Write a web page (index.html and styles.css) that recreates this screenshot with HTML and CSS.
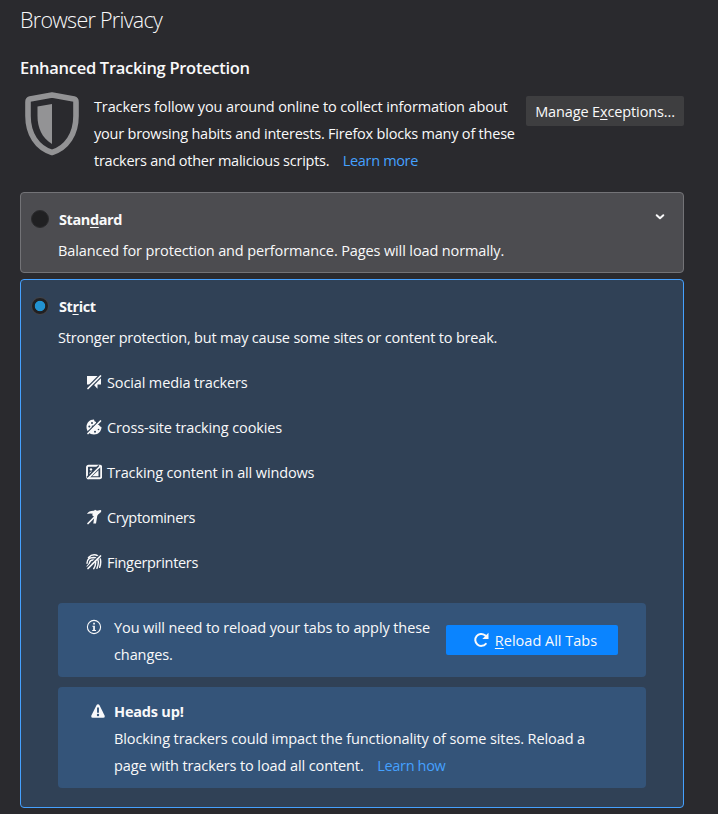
FILE: index.html
```html
<!DOCTYPE html>
<html lang="en">
<head>
<meta charset="utf-8">
<title>Browser Privacy</title>
<link rel="stylesheet" href="styles.css">
</head>
<body>
<main class="pane">
  <h1>Browser Privacy</h1>
  <h2>Enhanced Tracking Protection</h2>
  <section class="intro">
    <svg class="shield" viewBox="0 0 54 64"><path d="M27 3 49 7Q51 7.500 51 10V24C51 42 42 56 27 60.500 12 56 3 42 3 24V10Q3 7.500 5 7Z" fill="none" stroke="#939395" stroke-width="5.600" stroke-linejoin="round"/><path d="M12.500 14.500 27 12V52C17 46 12.500 36 12.500 24Z" fill="#939395"/></svg>
    <p class="intro-text"><span class="i1">Trackers follow you around online to collect information about</span><br><span class="i2">your browsing habits and interests. Firefox blocks many of these</span><br>trackers and other malicious scripts. <a class="link">Learn more</a></p>
    <button class="button manage">Manage E<u>x</u>ceptions...</button>
  </section>

  <section class="card standard">
    <div class="card-head"><span class="radio"></span><h3>Stan<u>d</u>ard</h3>
      <svg class="chevron" viewBox="0 0 10 8"><path d="M1.700 2.200 5 5.200 8.300 2.200" fill="none" stroke="#f9f9fa" stroke-width="2" stroke-linecap="round" stroke-linejoin="round"/></svg>
    </div>
    <p class="summary std-summary">Balanced for protection and performance. Pages will load normally.</p>
  </section>

  <section class="card strict">
    <div class="card-head"><span class="radio checked"></span><h3>St<u>r</u>ict</h3></div>
    <p class="summary strict-summary">Stronger protection, but may cause some sites or content to break.</p>
    <ul class="features">
      <li><svg viewBox="0 0 16 16"><path d="M1 2H14.500L15 3V10.500H11.500V14.800L8 11 7 10.500H1Z" fill="currentColor"/><path class="gap wide" d="M0 16.500 15 1.500"/><path class="slash" d="M2 14.500 14.500 2"/></svg><span class="f1">Social media trackers</span></li>
      <li><svg viewBox="0 0 16 16"><path d="M8 .5C3.500.5.5 4 .5 8s3 7.500 7.500 7.500S15.500 12 15.500 8Q14 8 13 6 10 6 10 3 8 2.500 8 .5Z" fill="currentColor"/><g class="holes"><circle cx="6" cy="4" r="1"/><circle cx="3.300" cy="7.500" r="1"/><circle cx="6.500" cy="7.200" r=".8"/><circle cx="9" cy="12.700" r="1"/><circle cx="12.500" cy="10.500" r=".8"/></g><path class="gap" d="M0 15 13.500 1.500"/><path class="slash" d="M2 14.500 14.500 2"/></svg><span class="f2">Cross-site tracking cookies</span></li>
      <li><svg viewBox="0 0 16 16"><rect x="1" y="1.800" width="14.200" height="12.400" rx="1.500" fill="none" stroke="currentColor" stroke-width="1.900"/><path d="M3.500 10.500V8.800L5 7.500l1.500.3ZM6 12.200l6.500-6V12.200Z" fill="currentColor"/><circle cx="5" cy="5.400" r="1.200" fill="currentColor"/><path class="gap" d="M1 13.500 13 1.500"/><path class="slash" d="M2 14.500 14.500 2"/></svg><span class="f3">Tracking content in all windows</span></li>
      <li><svg viewBox="0 0 16 16"><path d="M1 5Q3 1.500 8 1.800L9 .8 11 1.800 14.500 1V3.500L11.500 5.500 10 14.500H7.300L8.300 8 6 6 7 4.800Q3.500 4 1 5Z" fill="currentColor"/><path class="slash" d="M2 14.500 14.500 2"/></svg><span class="f4">Cryptominers</span></li>
      <li><svg viewBox="0 0 16 16"><g fill="none" stroke="currentColor" stroke-width="1.500" stroke-linecap="round"><path d="M2.500 3.500Q7-1 12 2M1 9.200Q1 3.500 7.500 3.400 12 3.500 12.300 7.500 12.500 11 11 14.300M1.300 12.200Q3.300 10.500 3.700 8.300 4.300 6 7 6 9.500 6 9.700 8.500 9.500 12 7.800 14.700M6 9.500 7 8.500M14.300 5q1 4-.6 8.300"/></g><path class="gap thin" d="M0 14.500 13 1.500"/><path class="slash" d="M2 14.500 14.500 2"/></svg><span class="f5">Fingerprinters</span></li>
    </ul>
    <div class="notice reload">
      <svg class="info" viewBox="0 0 16 16"><circle cx="8" cy="8" r="6.600" fill="none" stroke="currentColor" stroke-width="1.100"/><path d="M7.200 3.700h1.700v1.700H7.200ZM6.400 6.800h2.500V11H10v1H6.200v-1h1V7.800h-.8Z" fill="currentColor"/></svg>
      <p class="reload-text">You will need to reload your tabs to apply these<br>changes.</p>
      <button class="button primary"><svg viewBox="0 0 16 16"><path d="M12.800 11.800A6 6 0 1 1 12 3.200L14 5.200" fill="none" stroke="currentColor" stroke-width="2" stroke-linecap="round"/><path d="M15.500.8V7H9.300Z" fill="currentColor"/></svg><span><u>R</u>eload All Tabs</span></button>
    </div>
    <div class="notice warning">
      <svg class="warn" viewBox="0 0 16 16"><path d="M8 1.200Q8.900 1.200 9.400 2.100L14.700 12.700Q15.300 14.800 13.400 14.800H2.600Q.7 14.800 1.300 12.700L6.600 2.100Q7.100 1.200 8 1.200Z" fill="currentColor"/><path d="M8 5.300V9" stroke="#345479" stroke-width="1.900" stroke-linecap="round"/><circle cx="8" cy="12" r="1.200" fill="#345479"/></svg>
      <div><h3>Heads up!</h3>
      <p class="warn-text">Blocking trackers could impact the functionality of some sites. Reload a<br>page with trackers to load all content. <a class="link">Learn how</a></p></div>
    </div>
  </section>
</main>
</body>
</html>
```
FILE: styles.css
```css
* { box-sizing: border-box; }
body { margin: 0; background: #2a2a2e; color: #f9f9fa; font: 14.500px/27px "Open Sans", "Noto Sans", sans-serif; letter-spacing: -0.250px; }
h1, h2, h3, p, ul { margin: 0; padding: 0; }
p, h1, h2, h3, span { white-space: nowrap; }
u { text-decoration: underline; text-underline-offset: 2px; text-decoration-thickness: 1px; text-decoration-skip-ink: none; }
svg { display: block; flex: none; }
.pane { width: 664px; margin-left: 20px; }
h1 { font-size: 21.500px; font-weight: 300; line-height: 30px; padding-top: 5px; letter-spacing: -0.720px; }
h2 { font-size: 16.500px; font-weight: 600; line-height: 24px; margin-top: 21px; letter-spacing: -0.290px; }
h3 { font-size: 14.500px; font-weight: 700; line-height: 27px; letter-spacing: -0.400px; }
.intro { display: flex; height: 99px; margin-top: 13px; align-items: flex-start; }
.shield { width: 54px; height: 64px; margin: -1px 15px 0 5px; }
.intro-text { width: 432px; }
.i1 { letter-spacing: -0.130px; }
.i2 { letter-spacing: -0.215px; }
.link { color: #45a1ff; margin-left: 10px; letter-spacing: -0.340px; }
.button { border: 0; border-radius: 2px; height: 30px; padding: 0; font: inherit; letter-spacing: inherit; color: #f9f9fa; line-height: 30px; }
.manage { width: 158px; margin-top: 3px; padding-top: 1px; background: #3e3e40; white-space: nowrap; letter-spacing: -0.130px; }
.card { border: 1px solid #737377; border-radius: 4px; }
.standard { height: 81px; background: #4c4c50; }
.strict { height: 529px; margin-top: 6px; background: #304156; border-color: #45a1ff; }
.card-head { display: flex; align-items: center; height: 27px; margin-top: 13px; padding: 0 18px 0 10px; }
.radio { width: 18px; height: 18px; margin: -2px 10px 0 0; border-radius: 50%; background: #202022; border: 1px solid #2b2b2d; }
.checked { border: 1px solid #434348; background: radial-gradient(circle, #2292d0 0 4.800px, #202022 5.600px); }
.chevron { width: 10px; height: 8px; margin: -5px 0 0 auto; }
.summary { margin: 4px 0 0 37px; }
.std-summary { letter-spacing: -0.120px; }
.strict-summary { letter-spacing: -0.190px; }
.features { list-style: none; margin: 18px 0 0 65px; }
.features li { height: 27px; margin-bottom: 18px; display: flex; align-items: center; gap: 5px; }
.features svg { width: 16px; height: 16px; margin-top: -2px; }
.f1, .f2, .f3 { letter-spacing: -0.130px; }
.f4, .f5 { letter-spacing: -0.320px; }
.holes { fill: #304156; }
.gap { stroke: #304156; stroke-width: 1.700; }
.wide { stroke-width: 4; }
.thin { stroke-width: 1.200; }
.slash { stroke: currentColor; stroke-width: 1.700; stroke-linecap: round; }
.notice { width: 588px; margin-left: 37px; background: #345479; border-radius: 4px; display: flex; align-items: flex-start; }
.notice h3 { letter-spacing: -0.200px; }
.reload { height: 74px; margin-top: 27px; padding: 11px 28px; }
.info { width: 16px; height: 16px; margin: 5px 12px 0 0; }
.reload-text { width: 332px; letter-spacing: -0.100px; }
.primary { width: 172px; margin-top: 11px; padding: 1px 0 0 6px; background: #0a84ff; display: flex; align-items: center; justify-content: center; gap: 6px; letter-spacing: 0; }
.primary svg { width: 16px; height: 16px; margin-top: -2px; }
.warning { height: 101px; margin-top: 10px; padding: 11px 32px; }
.warn { width: 16px; height: 16px; margin: 5px 8px 0 0; }
.warn-text { letter-spacing: -0.100px; }
```
